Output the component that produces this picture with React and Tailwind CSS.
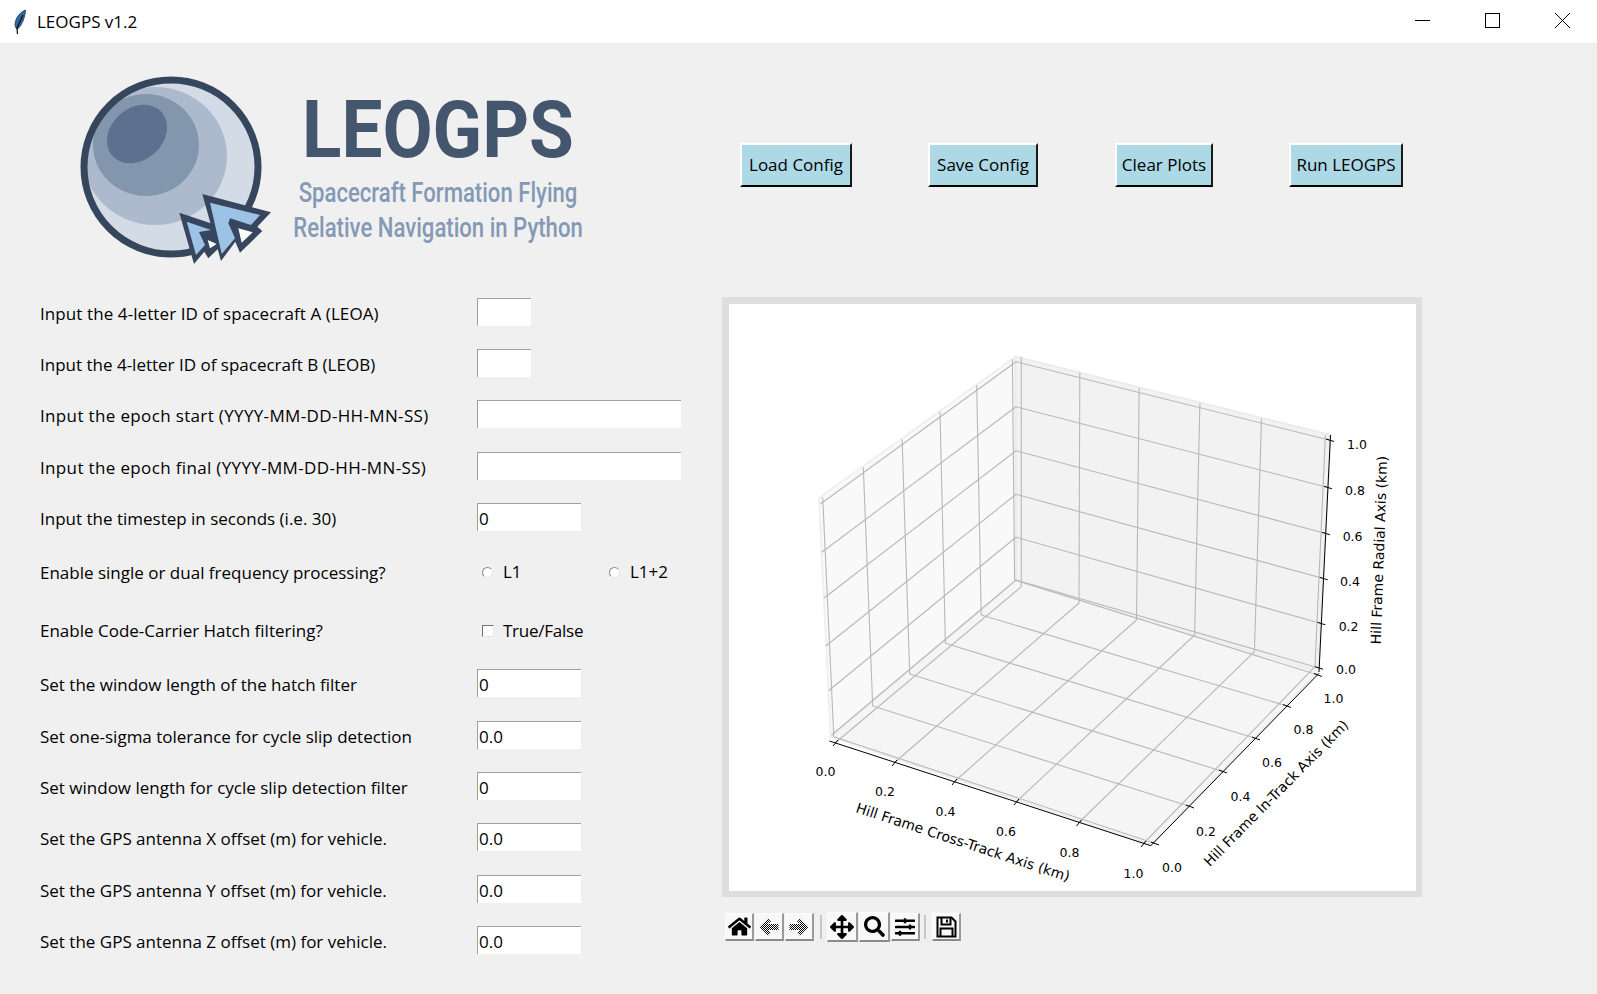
import { FaHome, FaArrowsAlt, FaSearch, FaSlidersH } from "react-icons/fa"

const UI_FONT = "font-['Open_Sans','Noto_Sans',sans-serif]"

const rows = [
  { label: "Input the 4-letter ID of spacecraft A (LEOA)", h: "h-[51px]", input: "w-[54px]", value: "", track: "tracking-[0.09px]" },
  { label: "Input the 4-letter ID of spacecraft B (LEOB)", h: "h-[51px]", input: "w-[54px]", value: "" },
  { label: "Input the epoch start (YYYY-MM-DD-HH-MN-SS)", h: "h-[52px]", input: "w-[204px]", value: "", track: "tracking-[0.35px]" },
  { label: "Input the epoch final (YYYY-MM-DD-HH-MN-SS)", h: "h-[51px]", input: "w-[204px]", value: "", track: "tracking-[0.35px]" },
  { label: "Input the timestep in seconds (i.e. 30)", h: "h-[55px]", input: "w-[104px]", value: "0" },
  { label: "Enable single or dual frequency processing?", h: "h-[59px]", kind: "radio" },
  { label: "Enable Code-Carrier Hatch filtering?", h: "h-[52px]", kind: "check" },
  { label: "Set the window length of the hatch filter", h: "h-[52px]", input: "w-[104px]", value: "0" },
  { label: "Set one-sigma tolerance for cycle slip detection", h: "h-[51px]", input: "w-[104px]", value: "0.0" },
  { label: "Set window length for cycle slip detection filter", h: "h-[51px]", input: "w-[104px]", value: "0" },
  { label: "Set the GPS antenna X offset (m) for vehicle.", h: "h-[52px]", input: "w-[104px]", value: "0.0" },
  { label: "Set the GPS antenna Y offset (m) for vehicle.", h: "h-[51px]", input: "w-[104px]", value: "0.0" },
  { label: "Set the GPS antenna Z offset (m) for vehicle.", h: "h-[28px]", input: "w-[104px]", value: "0.0" },
]

function Radio() {
  return <span className="block w-[11px] h-[11px] rounded-full bg-white border border-t-[#8a8a8a] border-l-[#8a8a8a] border-r-[#e4e4e4] border-b-[#e4e4e4]" />
}

function FormRow({ row }) {
  const labelPos = row.kind === "radio" ? "mt-[1px]" : row.kind === "check" ? "mt-0" : "mt-[2px]"
  return (
    <div className={`flex items-start ${row.h}`}>
      <div className={`w-[437px] leading-[28px] shrink-0 ${labelPos} ${row.track || ""}`}>{row.label}</div>
      {row.kind === "radio" && (
        <div className="flex items-center h-[28px]">
          <div className="flex items-center w-[126px] pl-[5px]"><Radio /><span className="ml-[10px]">L1</span></div>
          <div className="flex items-center pl-[6px]"><Radio /><span className="ml-[10px]">L1+2</span></div>
        </div>
      )}
      {row.kind === "check" && (
        <div className="flex items-center h-[28px] pl-[5px]">
          <span className="block w-[12px] h-[12px] bg-white border border-t-[#707070] border-l-[#707070] border-r-[#e8e8e8] border-b-[#e8e8e8] -mt-[1px]" />
          <span className="ml-[9px] tracking-[-0.25px]">True/False</span>
        </div>
      )}
      {row.input && (
        <div className={`${row.input} h-[28px] bg-white border-t border-l border-t-[#a0a0a0] border-l-[#a0a0a0] pl-[1px] leading-[29px]`}>{row.value}</div>
      )}
    </div>
  )
}

function Logo() {
  return (
    <svg viewBox="70 70 212 200" className="w-[212px] h-[200px] shrink-0">
      <defs>
        <clipPath id="ball"><circle cx="171" cy="167" r="87" /></clipPath>
      </defs>
      <circle cx="171" cy="167" r="87" fill="#d3dbe7" />
      <g clipPath="url(#ball)">
        <ellipse cx="155" cy="156" rx="72" ry="69" fill="#adb9cc" />
        <ellipse cx="146" cy="145" rx="53" ry="51" fill="#8296ae" />
        <ellipse cx="137" cy="134" rx="33" ry="26" transform="rotate(-42 137 134)" fill="#5c7090" />
      </g>
      <circle cx="171" cy="167" r="87" fill="none" stroke="#36465d" strokeWidth="7" />
      <polygon points="179.300,212.700 213,224 222,245 208.300,258.300 204.300,251.700 194,264" fill="#36465d" />
      <polygon points="186.700,221.700 211,230 199,232 205,245 196,255" fill="#9cc2e6" />
      <polygon points="207.700,240 216.700,244 210,248.300" fill="#ffffff" />
      <polygon points="202.300,194 271,212.300 257.300,226.700 262.300,231 240,252.700 235.300,241.700 221,261" fill="#36465d" />
      <polygon points="210,202.700 260,215 251,225 230,218.300 228.300,223.300 235,238.300 221.700,254" fill="#9cc2e6" />
      <polygon points="238.300,228.300 252.700,232.300 241.700,242.700" fill="#ffffff" />
    </svg>
  )
}

function Feather() {
  return (
    <svg viewBox="0 0 14 26" className="w-[14px] h-[26px] ml-[13px] shrink-0">
      <path d="M12.500 1 C7 3 2.500 9 2 15 C2 18 3 20 4.500 20 C8.500 17 12 9 12.500 1 Z" fill="#33689f" stroke="#1c3554" strokeWidth="0.8" />
      <path d="M10 6 L4 19 L4.500 25" fill="none" stroke="#0b0b0b" strokeWidth="1.200" />
    </svg>
  )
}

function WindowButtons() {
  return (
    <div className="flex h-full pb-[2px]">
      <div className="w-[70px] flex items-center justify-center">
        <svg width="15" height="15" viewBox="0 0 15 15"><line x1="0" y1="7.500" x2="15" y2="7.500" stroke="#000" /></svg>
      </div>
      <div className="w-[70px] flex items-center justify-center">
        <svg width="15" height="15" viewBox="0 0 15 15"><rect x="0.500" y="0.500" width="14" height="14" fill="none" stroke="#000" /></svg>
      </div>
      <div className="w-[70px] flex items-center justify-center">
        <svg width="15" height="15" viewBox="0 0 15 15"><path d="M0 0 L15 15 M15 0 L0 15" stroke="#000" /></svg>
      </div>
    </div>
  )
}

function TopButton({ label, w, ml }) {
  return (
    <button className={`${w} ${ml} h-[44px] bg-[#add8e6] border-t-2 border-l-2 border-r-2 border-b-2 border-t-white border-l-white border-r-[#1a1a1a] border-b-black text-black`}>
      {label}
    </button>
  )
}

// page coordinates, read off the screenshot. perspective makes the spacing uneven
const backZ = [[1016, 361.7], [1016, 406.7], [1016, 450.7], [1016, 494.3], [1016, 537.3], [1016, 580]]
const rightZ = [[1329, 440], [1327, 487.3], [1325, 533.3], [1322.7, 578.3], [1320.4, 623.3], [1318, 667.7]]
const leftZ = [[820.4, 504], [821.8, 552.3], [824, 598], [825.8, 646], [828.5, 690.7], [831.6, 735]]
const wallTopR = [[1021.3, 357], [1079.8, 372.7], [1139.2, 388], [1199.9, 403.3], [1261.5, 418.7], [1325.4, 435]]
const wallBotR = [[1021.3, 586.7], [1079, 603], [1136.5, 620], [1194.6, 635], [1254.4, 651.7], [1315, 666.7]]
const wallTopL = [[822.7, 497.3], [863.3, 467.3], [902.1, 439.3], [940, 411.7], [976.7, 385], [1012.4, 359.3]]
const wallBotL = [[833.8, 736.7], [872.7, 706], [909.7, 674], [945.4, 643.3], [981.2, 615], [1014.6, 580]]
const xTicks = [[835, 743], [894, 763], [954, 782], [1016, 802], [1078.5, 823], [1143, 844]]
const yTicks = [[1155, 843.5], [1190, 806.5], [1223, 771.5], [1256, 738.5], [1287, 706], [1318, 675]]

const zLabels = [["1.0", 1357, 444], ["0.8", 1355, 490], ["0.6", 1352.6, 536], ["0.4", 1350, 581], ["0.2", 1348.6, 626], ["0.0", 1346, 669.3]]
const xLabels = [["0.0", 825.4, 771.3], ["0.2", 885, 791.3], ["0.4", 945.4, 811.3], ["0.6", 1006, 831.3], ["0.8", 1069.5, 852.3], ["1.0", 1133.4, 873.3]]
const yLabels = [["0.0", 1172, 867.3], ["0.2", 1206, 831.7], ["0.4", 1240.5, 796], ["0.6", 1272, 762.3], ["0.8", 1303.5, 729.3], ["1.0", 1333.4, 698.3]]

function GridLines({ from, to }) {
  return from.map((p, i) => (
    <line key={i} x1={p[0]} y1={p[1]} x2={to[i][0]} y2={to[i][1]} stroke="#b8b8b8" strokeWidth="1.1" />
  ))
}

function Chart() {
  return (
    <svg viewBox="729 304 687 587" className="block w-[687px] h-[587px]" fontFamily="'DejaVu Sans', sans-serif">
      <polygon points="819,498 1015.500,356.700 1016,580.700 830.700,736.700" fill="#f9f9f9" stroke="#f0f0f0" strokeWidth="2" />
      <polygon points="1015.500,356.700 1330.700,435 1318,671.700 1016,580.700" fill="#f2f2f2" stroke="#ebebeb" strokeWidth="2" />
      <polygon points="830.700,736.700 1016,580.700 1318,671.700 1150.800,845" fill="#f5f5f5" stroke="#eeeeee" strokeWidth="2" />

      <GridLines from={leftZ} to={backZ} />
      <GridLines from={backZ} to={rightZ} />
      <GridLines from={wallTopR} to={wallBotR} />
      <GridLines from={wallTopL} to={wallBotL} />
      <GridLines from={wallBotR} to={xTicks} />
      <GridLines from={wallBotL} to={yTicks} />

      <g stroke="#000" strokeWidth="1" fill="none">
        <line x1="1330.500" y1="435" x2="1319" y2="672" />
        <line x1="829.400" y1="741" x2="1150.800" y2="845.700" />
        <line x1="1150.800" y1="845.700" x2="1319" y2="673.300" />
        {rightZ.map((p, i) => <line key={i} x1={p[0] - 3} y1={p[1] - 1} x2={p[0] + 5} y2={p[1] + 1.500} />)}
        {xTicks.map((p, i) => <line key={i} x1={p[0] - 2} y1={p[1] + 3} x2={p[0] + 3} y2={p[1] - 3} />)}
        {yTicks.map((p, i) => <line key={i} x1={p[0] - 4} y1={p[1] - 1.500} x2={p[0] + 4} y2={p[1] + 1.500} />)}
      </g>

      <g textAnchor="middle" dominantBaseline="central" fill="#000">
        <g fontSize="12.500">
          {[...zLabels, ...xLabels, ...yLabels].map(([t, x, y], i) => <text key={i} x={x} y={y}>{t}</text>)}
        </g>
        <g fontSize="14">
          <text x="963" y="842" transform="rotate(18.100 963 842)">Hill Frame Cross-Track Axis (km)</text>
          <text x="1276" y="793" transform="rotate(-45.400 1276 793)">Hill Frame In-Track Axis (km)</text>
          <text x="1379" y="550" transform="rotate(-88 1379 550)">Hill Frame Radial Axis (km)</text>
        </g>
      </g>
    </svg>
  )
}

function ToolButton({ children, big }) {
  return (
    <div className={`${big ? "w-[31px] h-[30px] -mt-px" : "w-[29px] h-[28px]"} flex items-center justify-center bg-[#f8f8f8] border-t border-l border-r-2 border-b-2 border-t-[#fdfdfd] border-l-[#fdfdfd] border-r-[#9a9a9a] border-b-[#8a8a8a] shrink-0`}>
      {children}
    </div>
  )
}

function DitherArrow({ flip }) {
  const id = flip ? "ditherR" : "ditherL"
  return (
    <svg width="20" height="18" viewBox="0 0 20 18" className={flip ? "-scale-x-100" : ""}>
      <defs>
        <pattern id={id} width="2" height="2" patternUnits="userSpaceOnUse">
          <rect width="2" height="2" fill="#ffffff" />
          <rect width="1" height="1" fill="#000000" />
          <rect x="1" y="1" width="1" height="1" fill="#000000" />
        </pattern>
      </defs>
      <polygon points="0.500,9 9,0.500 12,3.500 8.500,6 19.500,6 19.500,12 8.500,12 12,14.500 9,17.500" fill={`url(#${id})`} />
    </svg>
  )
}

function SaveIcon() {
  return (
    <svg width="21" height="22" viewBox="0 0 21 22">
      <path d="M1.500 1.500 H15.500 L19.500 5.500 V20.500 H1.500 Z" fill="none" stroke="#000" strokeWidth="2" />
      <path d="M5.500 1.500 V8.500 H14.500 V1.500 M11 3.500 V6.500" fill="none" stroke="#000" strokeWidth="2" />
      <path d="M4.500 20.500 V12.500 H16.500 V20.500" fill="none" stroke="#000" strokeWidth="2" />
    </svg>
  )
}

function Toolbar() {
  return (
    <div className="flex items-start mt-[16px] ml-[3px]">
      <ToolButton><FaHome size={23} color="#000" /></ToolButton>
      <div className="ml-[1px]"><ToolButton><DitherArrow /></ToolButton></div>
      <div className="ml-[1px]"><ToolButton><DitherArrow flip /></ToolButton></div>
      <div className="w-[2px] h-[24px] bg-[#c8c8c8] ml-[6px] mr-[5px] mt-[2px]" />
      <ToolButton big><FaArrowsAlt size={24} color="#000" /></ToolButton>
      <div className="ml-[1px]"><ToolButton big><FaSearch size={21} color="#000" /></ToolButton></div>
      <div className="ml-[1px]"><ToolButton><FaSlidersH size={20} color="#000" /></ToolButton></div>
      <div className="w-[2px] h-[24px] bg-[#c8c8c8] ml-[4px] mr-[6px] mt-[2px]" />
      <ToolButton><SaveIcon /></ToolButton>
    </div>
  )
}

export default function App() {
  return (
    <div className={`w-[1597px] h-[994px] overflow-hidden bg-[#f0f0f0] text-black text-[17px] ${UI_FONT}`}>
      <div className="h-[43px] bg-white flex items-center justify-between">
        <div className="flex items-center">
          <Feather />
          <span className="ml-[10px]">LEOGPS v1.2</span>
        </div>
        <WindowButtons />
      </div>

      <div className="h-[255px] flex items-start">
        <div className="ml-[70px] mt-[27px]"><Logo /></div>
        <div className="ml-[6px] w-[300px] font-['Roboto',sans-serif] whitespace-nowrap shrink-0">
          <div className="flex justify-center text-[80px] leading-[80px] mt-[47px] font-bold text-[#44566e] scale-x-[0.91]">LEOGPS</div>
          <div className="flex justify-center text-[28px] leading-[35px] mt-[5px] font-medium text-[#8499b5] scale-x-[0.79]">Spacecraft Formation Flying</div>
          <div className="flex justify-center text-[28px] leading-[35px] font-medium text-[#8499b5] scale-x-[0.79]">Relative Navigation in Python</div>
        </div>
        <div className="flex mt-[100px] ml-[152px]">
          <TopButton label="Load Config" w="w-[112px]" ml="ml-0" />
          <TopButton label="Save Config" w="w-[110px]" ml="ml-[76px]" />
          <TopButton label="Clear Plots" w="w-[98px]" ml="ml-[77px]" />
          <TopButton label="Run LEOGPS" w="w-[114px]" ml="ml-[76px]" />
        </div>
      </div>

      <div className="flex items-start">
        <div className="w-[722px] pl-[40px] shrink-0">
          {rows.map(row => <FormRow key={row.label} row={row} />)}
        </div>
        <div className="-mt-px">
          <div className="w-[700px] h-[600px] border-[7px] border-r-[6px] border-b-[6px] border-[#dedede] bg-white">
            <Chart />
          </div>
          <Toolbar />
        </div>
      </div>
    </div>
  )
}
